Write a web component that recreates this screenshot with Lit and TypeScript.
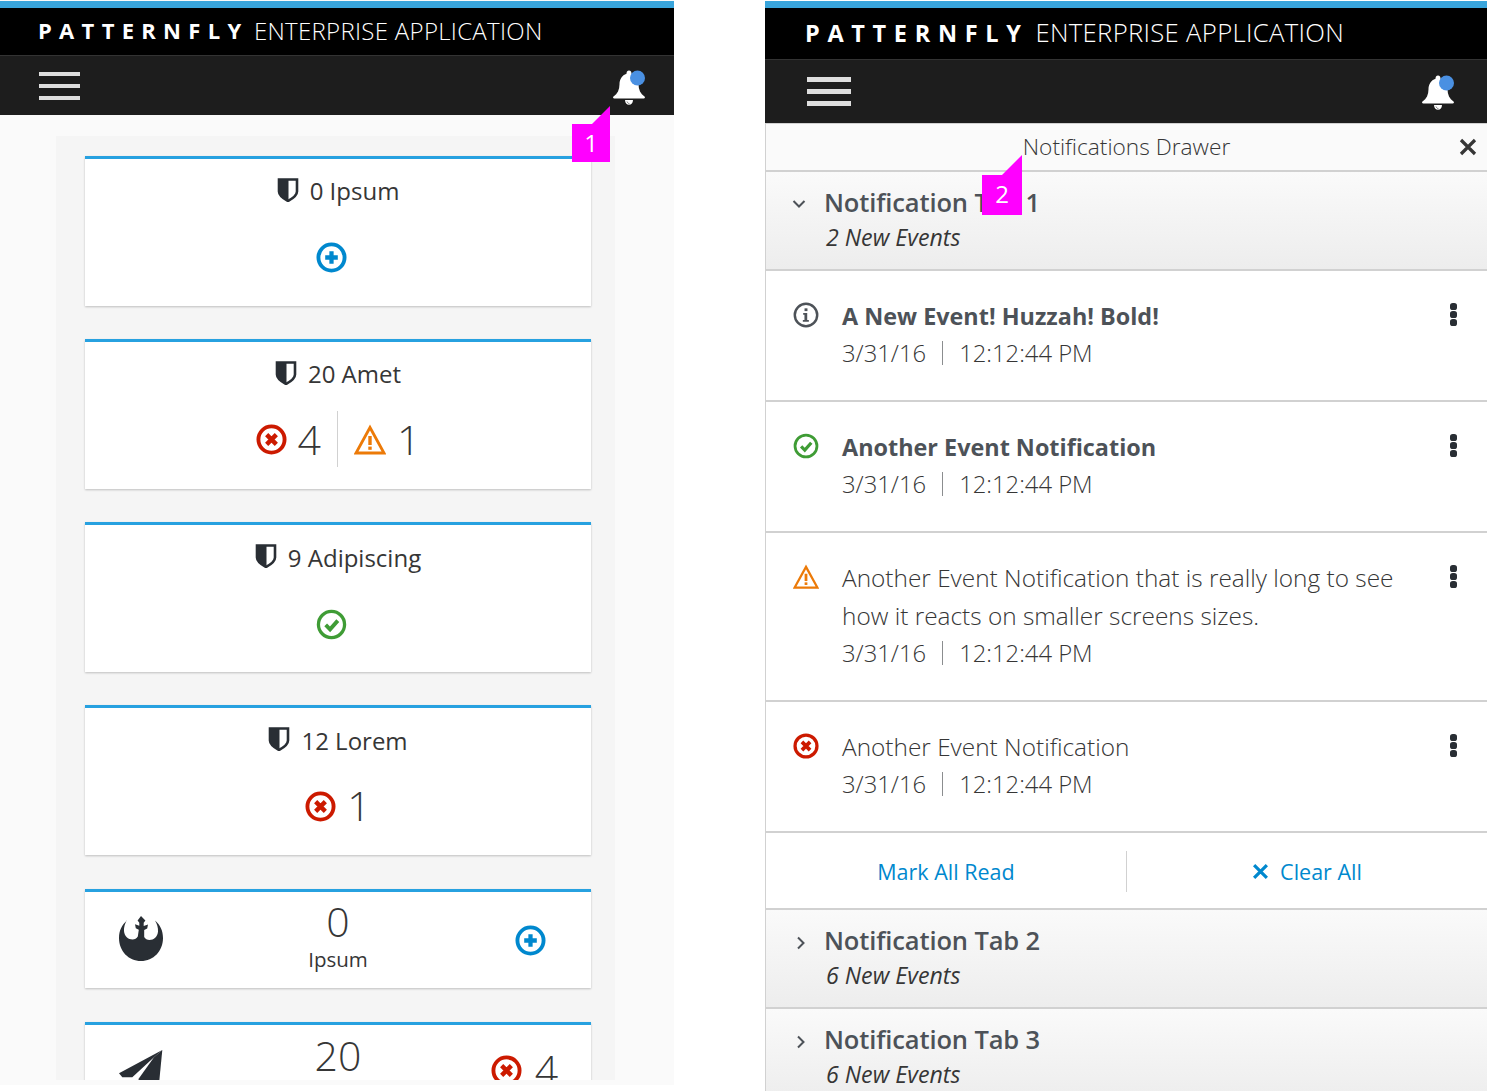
import { LitElement, html, css, svg } from 'lit';
import { customElement, property } from 'lit/decorators.js';

const errorIcon = (s: number) => html`<svg width=${s} height=${s} viewBox="0 0 32 32">
  <circle cx="16" cy="16" r="13.5" fill="none" stroke="#cc1a00" stroke-width="4"/>
  <path d="M11 11l10 10M21 11l-10 10" stroke="#cc1a00" stroke-width="4.6" fill="none"/>
</svg>`;

const okIcon = (s: number) => html`<svg width=${s} height=${s} viewBox="0 0 32 32">
  <circle cx="16" cy="16" r="13.5" fill="none" stroke="#3f9c35" stroke-width="3.4"/>
  <path d="M10 16.500l4.500 4.500 8-9" stroke="#3f9c35" stroke-width="4" fill="none"/>
</svg>`;

const addIcon = (s: number) => html`<svg width=${s} height=${s} viewBox="0 0 32 32">
  <circle cx="16" cy="16" r="13.5" fill="none" stroke="#0088ce" stroke-width="4"/>
  <path d="M16 9.500v13M9.500 16h13" stroke="#0088ce" stroke-width="4.4" fill="none"/>
</svg>`;

const warnIcon = (s: number) => html`<svg width=${s} height=${s} viewBox="0 0 32 32">
  <path d="M16 3.500L30 29H2z" fill="none" stroke="#ec7a08" stroke-width="2.8" stroke-linejoin="miter"/>
  <path d="M16 12v9" stroke="#ec7a08" stroke-width="3.4"/>
  <rect x="14.3" y="22.6" width="3.4" height="3.2" fill="#ec7a08"/>
</svg>`;

const infoIcon = (s: number) => html`<svg width=${s} height=${s} viewBox="0 0 32 32">
  <circle cx="16" cy="16" r="13.8" fill="none" stroke="#4d5258" stroke-width="3"/>
  <rect x="14.2" y="7.8" width="3.6" height="3.4" fill="#4d5258"/>
  <path d="M12.500 13.600h5v8.600h2v2h-7.400v-2h2v-6.600h-1.600z" fill="#4d5258"/>
</svg>`;

const shieldIcon = html`<svg class="shield" width="22" height="24" viewBox="0 0 22 24">
  <path d="M2 1.500h18v12c0 4-4 6.800-9 9.500-5-2.700-9-5.500-9-9.500z" fill="#fff" stroke="#292e34" stroke-width="2.600"/>
  <path d="M2 1.500h9.500V23C6 20.300 2 17.500 2 13.500z" fill="#292e34"/>
</svg>`;

const rebelIcon = html`<svg width="44" height="46" viewBox="0 0 44 46">
  <path d="M8 4.500C2.800 9 0 14.500 0 22c0 13 9.500 23 22 23s22-10 22-23c0-7.500-2.800-13-8-17.500 2.200 3.800 3.200 7.500 3 11-.3 5-4.300 8.500-8.500 8.500-2.300 0-4.200-1.200-5.300-3L25.200 14l3-1.500.8-4-4.300 1.600V6.700l1.700-2.200L22 0l-3.400 4.500 1.700 2.200v3.100L16 8.200l.8 4 3 1.500-1 6.800c-1.100 1.800-3 3-5.300 3-4.200 0-8.200-3.500-8.500-8.500-.2-3.500.8-7.200 3-11z" fill="#292e34"/>
</svg>`;

const planeIcon = html`<svg width="44" height="34" viewBox="0 0 44 34">
  <path d="M43.300 0L0 23.300l3.300 4h10L35 7.300z" fill="#292e34"/>
  <path d="M35 7.300L20 28.300 18 34h22L43.300 0z" fill="#292e34"/>
</svg>`;

@customElement('app-masthead')
export class AppMasthead extends LitElement {
  @property({ type: Boolean }) big = false;

  static styles = css`
    :host { display: block; font-family: "Open Sans", sans-serif; }
    .accent { height: 7px; margin-top: 1px; background: #39a5dc; }
    .brand {
      height: 47px;
      box-sizing: border-box;
      padding: 0 0 3px 38px;
      background: #000;
      color: #fff;
      display: flex;
      align-items: center;
    }
    .name { font-weight: 700; font-size: 22px; letter-spacing: 7.300px; margin-right: 5.500px; }
    .app { font-weight: 300; font-size: 24px; letter-spacing: 0.300px; }
    .bar {
      height: 60px;
      padding: 0 28px 0 39px;
      box-sizing: border-box;
      background: #1d1d1d;
      border-top: 1px solid #333;
      display: flex;
      align-items: center;
      justify-content: space-between;
    }
    .burger { width: 41px; display: flex; flex-direction: column; gap: 7.600px; margin-top: 1px; }
    .burger i { display: block; height: 4px; background: #dedede; }
    .bell { display: block; margin-top: 4px; }
    .big .brand { height: 51px; padding: 0 0 2px 40px; }
    .big .name { font-size: 23.500px; letter-spacing: 7.670px; margin-right: 7px; }
    .big .app { font-size: 25.700px; }
    .big .bar { height: 64px; padding: 0 32px 0 42px; }
    .big .burger { width: 44px; gap: 7.700px; margin-top: 0; }
    .big .burger i { height: 4.300px; }
    .big .bell { margin-top: 2px; }
  `;

  render() {
    return html`<div class=${this.big ? 'big' : ''}>
      <div class="accent"></div>
      <div class="brand">
        <span class="name">PATTERNFLY</span><span class="app">ENTERPRISE APPLICATION</span>
      </div>
      <div class="bar">
        <div class="burger"><i></i><i></i><i></i></div>
        <svg class="bell" width="34" height="36" viewBox="0 0 34 36">
          <path d="M15 1.500c1-1.400 3-1.400 4 0 .5.800.5 1.500.5 2.200 4.500 1.500 7 5.500 7 10.500 0 5.500 2 9.500 6 12.300.9.700.4 2-.8 2H2.300c-1.200 0-1.700-1.300-.8-2 4-2.800 6-6.800 6-12.300 0-5 2.500-9 7-10.500 0-.7 0-1.400.5-2.200z" fill="#fff"/>
          <path d="M13 30h8c0 3-1.800 4.800-4 4.800s-4-1.800-4-4.800z" fill="#fff"/>
          <path d="M15 31.500c.5 1.300 1.300 2 2.500 2.300" fill="none" stroke="#777" stroke-width="1"/>
          <circle cx="25.500" cy="8" r="7.500" fill="#4a90e2"/>
        </svg>
      </div>
    </div>`;
  }
}

const cards = [
  { label: '0 Ipsum', statuses: [{ kind: 'add' }] },
  { label: '20 Amet', statuses: [{ kind: 'error', n: 4 }, { kind: 'warn', n: 1 }] },
  { label: '9 Adipiscing', statuses: [{ kind: 'ok' }] },
  { label: '12 Lorem', statuses: [{ kind: 'error', n: 1 }] },
];

const events = [
  { icon: infoIcon(26), title: 'A New Event! Huzzah! Bold!', bold: true, size: 'r131' },
  { icon: okIcon(26), title: 'Another Event Notification', bold: true, size: 'r131' },
  { icon: warnIcon(26), title: 'Another Event Notification that is really long to see how it reacts on smaller screens sizes.', bold: false, size: 'r169' },
  { icon: errorIcon(26), title: 'Another Event Notification', bold: false, size: 'r131' },
];

@customElement('app-root')
export class AppRoot extends LitElement {
  static styles = css`
    :host { display: block; font-family: "Open Sans", sans-serif; background: #fff; color: #363636; }
    .screens { display: flex; align-items: flex-start; gap: 91px; height: 1091px; overflow: hidden; }

    .left { position: relative; width: 674px; flex: none; height: 1085px; background: #fafafa; }
    .panel {
      width: 559px;
      height: 944px;
      margin: 21px 0 0 56px;
      padding: 19.500px 0 0 29px;
      box-sizing: border-box;
      background: #f5f5f5;
      overflow: hidden;
    }
    .card {
      width: 506px;
      box-sizing: border-box;
      margin-bottom: 33.300px;
      background: #fff;
      border-top: 3px solid #27a1e0;
      box-shadow: 0 1px 2px rgba(0, 0, 0, 0.22);
    }
    .stacked { height: 150px; padding-top: 16px; text-align: center; }
    .card-title {
      display: flex;
      justify-content: center;
      align-items: center;
      gap: 11px;
      height: 32px;
      font-size: 24px;
      font-weight: 400;
      color: #363636;
    }
    .shield { margin-top: -2px; }
    .statuses { display: flex; justify-content: center; align-items: center; height: 56px; margin-top: 22px; margin-left: -14px; }
    .statuses.counted { margin: 21px 0 0; }
    .status { display: flex; align-items: center; gap: 11px; padding: 0 16px; font-size: 41px; font-weight: 300; line-height: 56px; color: #363636; }
    .status + .status { border-left: 1px solid #d1d1d1; padding-left: 16px; }
    .status svg { margin-top: 2px; }

    .mini { height: 99.700px; display: grid; grid-template-columns: 120px 1fr 120px; align-items: center; }
    .mini .side { padding: 3px 0 0 34px; }
    .mini .mid { text-align: center; margin-top: -10px; }
    .mini .num { font-size: 41px; font-weight: 300; line-height: 48px; }
    .mini .sub { font-size: 20.500px; line-height: 28px; }
    .mini .end { display: flex; justify-content: center; gap: 13px; align-items: center; font-size: 41px; font-weight: 300; padding-right: 1px; }
    .mini.cut { height: 120px; align-items: flex-start; }
    .mini.cut .side { padding-top: 25px; }
    .mini.cut .mid { margin-top: 6px; }
    .mini.cut .end { padding: 20px 13px 0 0; }
    .mini.cut .end span { margin-top: -4px; }

    .callout {
      position: absolute;
      width: 38px;
      height: 38px;
      background: #ff00ff;
      color: #fff;
      font-size: 24px;
      line-height: 38px;
      text-align: center;
    }
    .callout::before {
      content: "";
      position: absolute;
      right: 0;
      bottom: 100%;
      width: 18px;
      height: 18px;
      background: #ff00ff;
      clip-path: polygon(100% 0, 100% 100%, 0 100%);
    }
    .c1 { left: 572px; top: 124px; }
    .c2 { left: 217px; top: 175px; width: 40px; height: 40px; line-height: 38px; }
    .c2::before { width: 20px; height: 20px; }

    .right { position: relative; width: 722px; flex: none; }
    .drawer { border-left: 1.500px solid #d1d1d1; }
    .drawer-head {
      position: relative;
      height: 46px;
      display: flex;
      align-items: center;
      justify-content: center;
      background: #fafafa;
      font-size: 22.700px;
      font-weight: 300;
      border-top: 1px solid #d1d1d1;
      border-bottom: 2px solid #d1d1d1;
      color: #363636;
    }
    .drawer-head span { margin-top: -2px; }
    .drawer-head svg { position: absolute; right: 10px; top: 14px; }
    .tab {
      height: 99px;
      box-sizing: border-box;
      padding: 11.500px 0 0 25px;
      background: linear-gradient(#fafafa, #ededed);
      border-bottom: 2px solid #d1d1d1;
      display: grid;
      grid-template-columns: 33px 1fr;
      align-items: start;
    }
    .tab svg { margin-top: 12px; }
    .tab svg.closed { margin: 13px 0 0 2px; }
    .tab h3 { margin: 0; font-size: 25.500px; line-height: 36px; font-weight: 600; color: #4d5258; letter-spacing: -0.130px; }
    .tab em { display: block; font-size: 23.200px; line-height: 34px; font-weight: 400; color: #363636; margin-left: 2px; }
    .item {
      box-sizing: border-box;
      background: #fff;
      border-bottom: 2px solid #d1d1d1;
      display: grid;
      grid-template-columns: 49px 1fr 52px;
      padding: 25px 0 0 27px;
    }
    .r131 { height: 131px; }
    .r169 { height: 169px; }
    .item .ico { margin-top: 6px; }
    .item .text { font-size: 24.400px; line-height: 38px; font-weight: 300; color: #363636; margin: 1px 0 -1px; }
    .item .text.bold { font-weight: 700; color: #4d5258; font-size: 23.400px; }
    .when { display: flex; align-items: center; font-size: 23.800px; line-height: 38px; font-weight: 300; color: #363636; }
    .when i { display: block; width: 1px; height: 24px; background: #8b8d8f; margin: 0 16px; }
    .dots { display: flex; flex-direction: column; gap: 1.500px; margin: 7px 0 0 15px; }
    .dots i { display: block; width: 7px; height: 6.500px; border-radius: 40%; background: #292e34; }
    .actions { height: 77px; box-sizing: border-box; padding-top: 2px; background: #fff; border-bottom: 2px solid #d1d1d1; display: grid; grid-template-columns: 360px 1fr; align-items: center; color: #0088ce; font-size: 21.500px; font-weight: 400; }
    .actions div { display: flex; justify-content: center; align-items: center; gap: 11px; height: 41px; }
    .actions div + div { border-left: 1.500px solid #d1d1d1; }
    .tab.last { height: 90px; border-bottom: 0; }
  `;

  private status(s: { kind: string; n?: number }) {
    const icon = s.kind === 'error' ? errorIcon(31) : s.kind === 'warn' ? warnIcon(32) : s.kind === 'ok' ? okIcon(31) : addIcon(31);
    return html`<div class="status">${icon}${s.n !== undefined ? html`<span>${s.n}</span>` : ''}</div>`;
  }

  private tab(title: string, sub: string, open: boolean, last = false) {
    return html`<div class="tab ${last ? 'last' : ''}">
      <svg class=${open ? '' : 'closed'} width="16" height="16" viewBox="0 0 16 16">
        ${open
          ? svg`<path d="M2.500 5l5.500 5.500L13.500 5" fill="none" stroke="#4d5258" stroke-width="2"/>`
          : svg`<path d="M5 2.500L10.500 8 5 13.500" fill="none" stroke="#4d5258" stroke-width="2"/>`}
      </svg>
      <div><h3>${title}</h3><em>${sub}</em></div>
    </div>`;
  }

  render() {
    return html`<div class="screens">
      <section class="left">
        <app-masthead></app-masthead>
        <div class="panel">
          ${cards.map(
            (c) => html`<div class="card stacked">
              <div class="card-title">${shieldIcon}<span>${c.label}</span></div>
              <div class="statuses ${c.statuses[0].n !== undefined ? 'counted' : ''}">${c.statuses.map((s) => this.status(s))}</div>
            </div>`,
          )}
          <div class="card mini">
            <div class="side">${rebelIcon}</div>
            <div class="mid"><div class="num">0</div><div class="sub">Ipsum</div></div>
            <div class="end">${addIcon(31)}</div>
          </div>
          <div class="card mini cut">
            <div class="side">${planeIcon}</div>
            <div class="mid"><div class="num">20</div></div>
            <div class="end">${errorIcon(31)}<span>4</span></div>
          </div>
        </div>
        <div class="callout c1">1</div>
      </section>
      <section class="right">
        <app-masthead big></app-masthead>
        <div class="drawer">
          <div class="drawer-head">
            <span>Notifications Drawer</span>
            <svg width="18" height="18" viewBox="0 0 18 18"><path d="M2 2l14 14M16 2L2 16" stroke="#363636" stroke-width="3.200" fill="none"/></svg>
          </div>
          ${this.tab('Notification Tab 1', '2 New Events', true)}
          ${events.map(
            (e) => html`<div class="item ${e.size}">
              <div class="ico">${e.icon}</div>
              <div>
                <div class="text ${e.bold ? 'bold' : ''}">${e.title}</div>
                <div class="when">3/31/16<i></i>12:12:44 PM</div>
              </div>
              <div class="dots"><i></i><i></i><i></i></div>
            </div>`,
          )}
          <div class="actions">
            <div>Mark All Read</div>
            <div>
              <svg width="17" height="17" viewBox="0 0 16 16"><path d="M2 2l12 12M14 2L2 14" stroke="#0088ce" stroke-width="3" fill="none"/></svg>
              Clear All
            </div>
          </div>
          ${this.tab('Notification Tab 2', '6 New Events', false)}
          ${this.tab('Notification Tab 3', '6 New Events', false, true)}
        </div>
        <div class="callout c2">2</div>
      </section>
    </div>`;
  }
}
